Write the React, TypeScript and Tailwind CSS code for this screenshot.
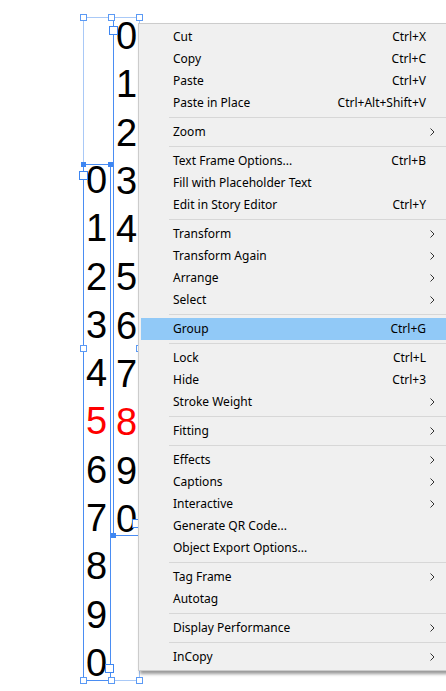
import React from 'react';

type Item =
  | { sep: true }
  | { label: string; shortcut?: string; sub?: boolean; active?: boolean; sep?: false };

const items: Item[] = [
  { label: 'Cut', shortcut: 'Ctrl+X' },
  { label: 'Copy', shortcut: 'Ctrl+C' },
  { label: 'Paste', shortcut: 'Ctrl+V' },
  { label: 'Paste in Place', shortcut: 'Ctrl+Alt+Shift+V' },
  { sep: true },
  { label: 'Zoom', sub: true },
  { sep: true },
  { label: 'Text Frame Options...', shortcut: 'Ctrl+B' },
  { label: 'Fill with Placeholder Text' },
  { label: 'Edit in Story Editor', shortcut: 'Ctrl+Y' },
  { sep: true },
  { label: 'Transform', sub: true },
  { label: 'Transform Again', sub: true },
  { label: 'Arrange', sub: true },
  { label: 'Select', sub: true },
  { sep: true },
  { label: 'Group', shortcut: 'Ctrl+G', active: true },
  { sep: true },
  { label: 'Lock', shortcut: 'Ctrl+L' },
  { label: 'Hide', shortcut: 'Ctrl+3' },
  { label: 'Stroke Weight', sub: true },
  { sep: true },
  { label: 'Fitting', sub: true },
  { sep: true },
  { label: 'Effects', sub: true },
  { label: 'Captions', sub: true },
  { label: 'Interactive', sub: true },
  { label: 'Generate QR Code...' },
  { label: 'Object Export Options...' },
  { sep: true },
  { label: 'Tag Frame', sub: true },
  { label: 'Autotag' },
  { sep: true },
  { label: 'Display Performance', sub: true },
  { sep: true },
  { label: 'InCopy', sub: true },
];

const digits = ['0', '1', '2', '3', '4', '5', '6', '7', '8', '9', '0'];

function Chevron() {
  return (
    <svg width="5" height="8" viewBox="0 0 5 8" className="block">
      <path d="M0.5 0.5 L4 4 L0.5 7.5" fill="none" stroke="#333" strokeWidth="1" />
    </svg>
  );
}

function DigitColumn({ red }: { red: number }) {
  return (
    <div className="flex flex-col items-center font-['Liberation_Sans',sans-serif] text-[38px] leading-[48.3px] text-black">
      {digits.map((d, i) => (
        <span key={i} className={i === red ? 'text-[#ff0000]' : ''}>
          {d}
        </span>
      ))}
    </div>
  );
}

// hollow handle of the selection box
function Handle({ x, y }: { x: number; y: number }) {
  return (
    <div
      className="absolute w-[7px] h-[7px] border border-[#5b9af5] bg-white"
      style={{ left: x - 3, top: y - 3 }}
    />
  );
}

function Dot({ x, y }: { x: number; y: number }) {
  return (
    <div className="absolute w-[5px] h-[5px] bg-[#3d86f2]" style={{ left: x - 2, top: y - 2 }} />
  );
}

// in / out port of a text frame
function Port({ x, y }: { x: number; y: number }) {
  return (
    <div
      className="absolute w-[9px] h-[9px] border border-[#3d86f2] bg-white"
      style={{ left: x - 4, top: y - 4 }}
    />
  );
}

function ContextMenu() {
  return (
    <div className="absolute left-[138px] top-[23px] w-[330px] bg-[#f0f0f0] border border-[#cccccc] pt-[2px] pb-[2px] shadow-[2px_3px_3px_rgba(0,0,0,0.4)] font-['Noto_Sans',sans-serif] text-[12px] text-black">
      {items.map((it, i) =>
        it.sep ? (
          <div key={i} className="h-[7px] pt-[3px] pl-[30px]">
            <div className="h-px bg-[#d7d7d7]" />
          </div>
        ) : (
          <div
            key={i}
            className={`flex items-center h-[22px] ml-[2px] pl-[32px] ${it.active ? 'bg-[#91c9f7]' : ''}`}
          >
            <span className="flex-1 whitespace-nowrap">{it.label}</span>
            {it.shortcut && <span className="whitespace-nowrap">{it.shortcut}</span>}
            <div className="w-[41px] pl-[4px]">{it.sub && <Chevron />}</div>
          </div>
        )
      )}
    </div>
  );
}

export default function App() {
  return (
    <div className="relative w-[446px] h-[691px] overflow-hidden bg-white">
      {/* selection bounding box */}
      <div className="absolute left-[83px] top-[17px] w-[57px] h-[664px] border border-[#a9c9f7]" />

      {/* right text frame */}
      <div className="absolute left-[113px] top-[17px] w-[27px] h-[519px] border-l border-b border-[#4a8df3]" />
      <div className="absolute left-[114px] top-[12px] w-[25px]">
        <DigitColumn red={8} />
      </div>

      {/* left text frame */}
      <div className="absolute left-[83px] top-[164px] w-[28px] h-[517px] border border-[#4a8df3]" />
      <div className="absolute left-[83px] top-[156px] w-[27px]">
        <DigitColumn red={5} />
      </div>

      <Handle x={83} y={17} />
      <Handle x={111} y={17} />
      <Handle x={139} y={17} />
      <Handle x={83} y={348} />
      <Handle x={139} y={348} />
      <Handle x={83} y={680} />
      <Handle x={111} y={680} />
      <Handle x={139} y={680} />

      <Dot x={83} y={164} />
      <Dot x={110} y={164} />
      <Dot x={113} y={535} />
      <Port x={113} y={30} />
      <Port x={83} y={175} />
      <Port x={109} y={668} />
      <Port x={136} y={523} />

      <ContextMenu />
    </div>
  );
}
